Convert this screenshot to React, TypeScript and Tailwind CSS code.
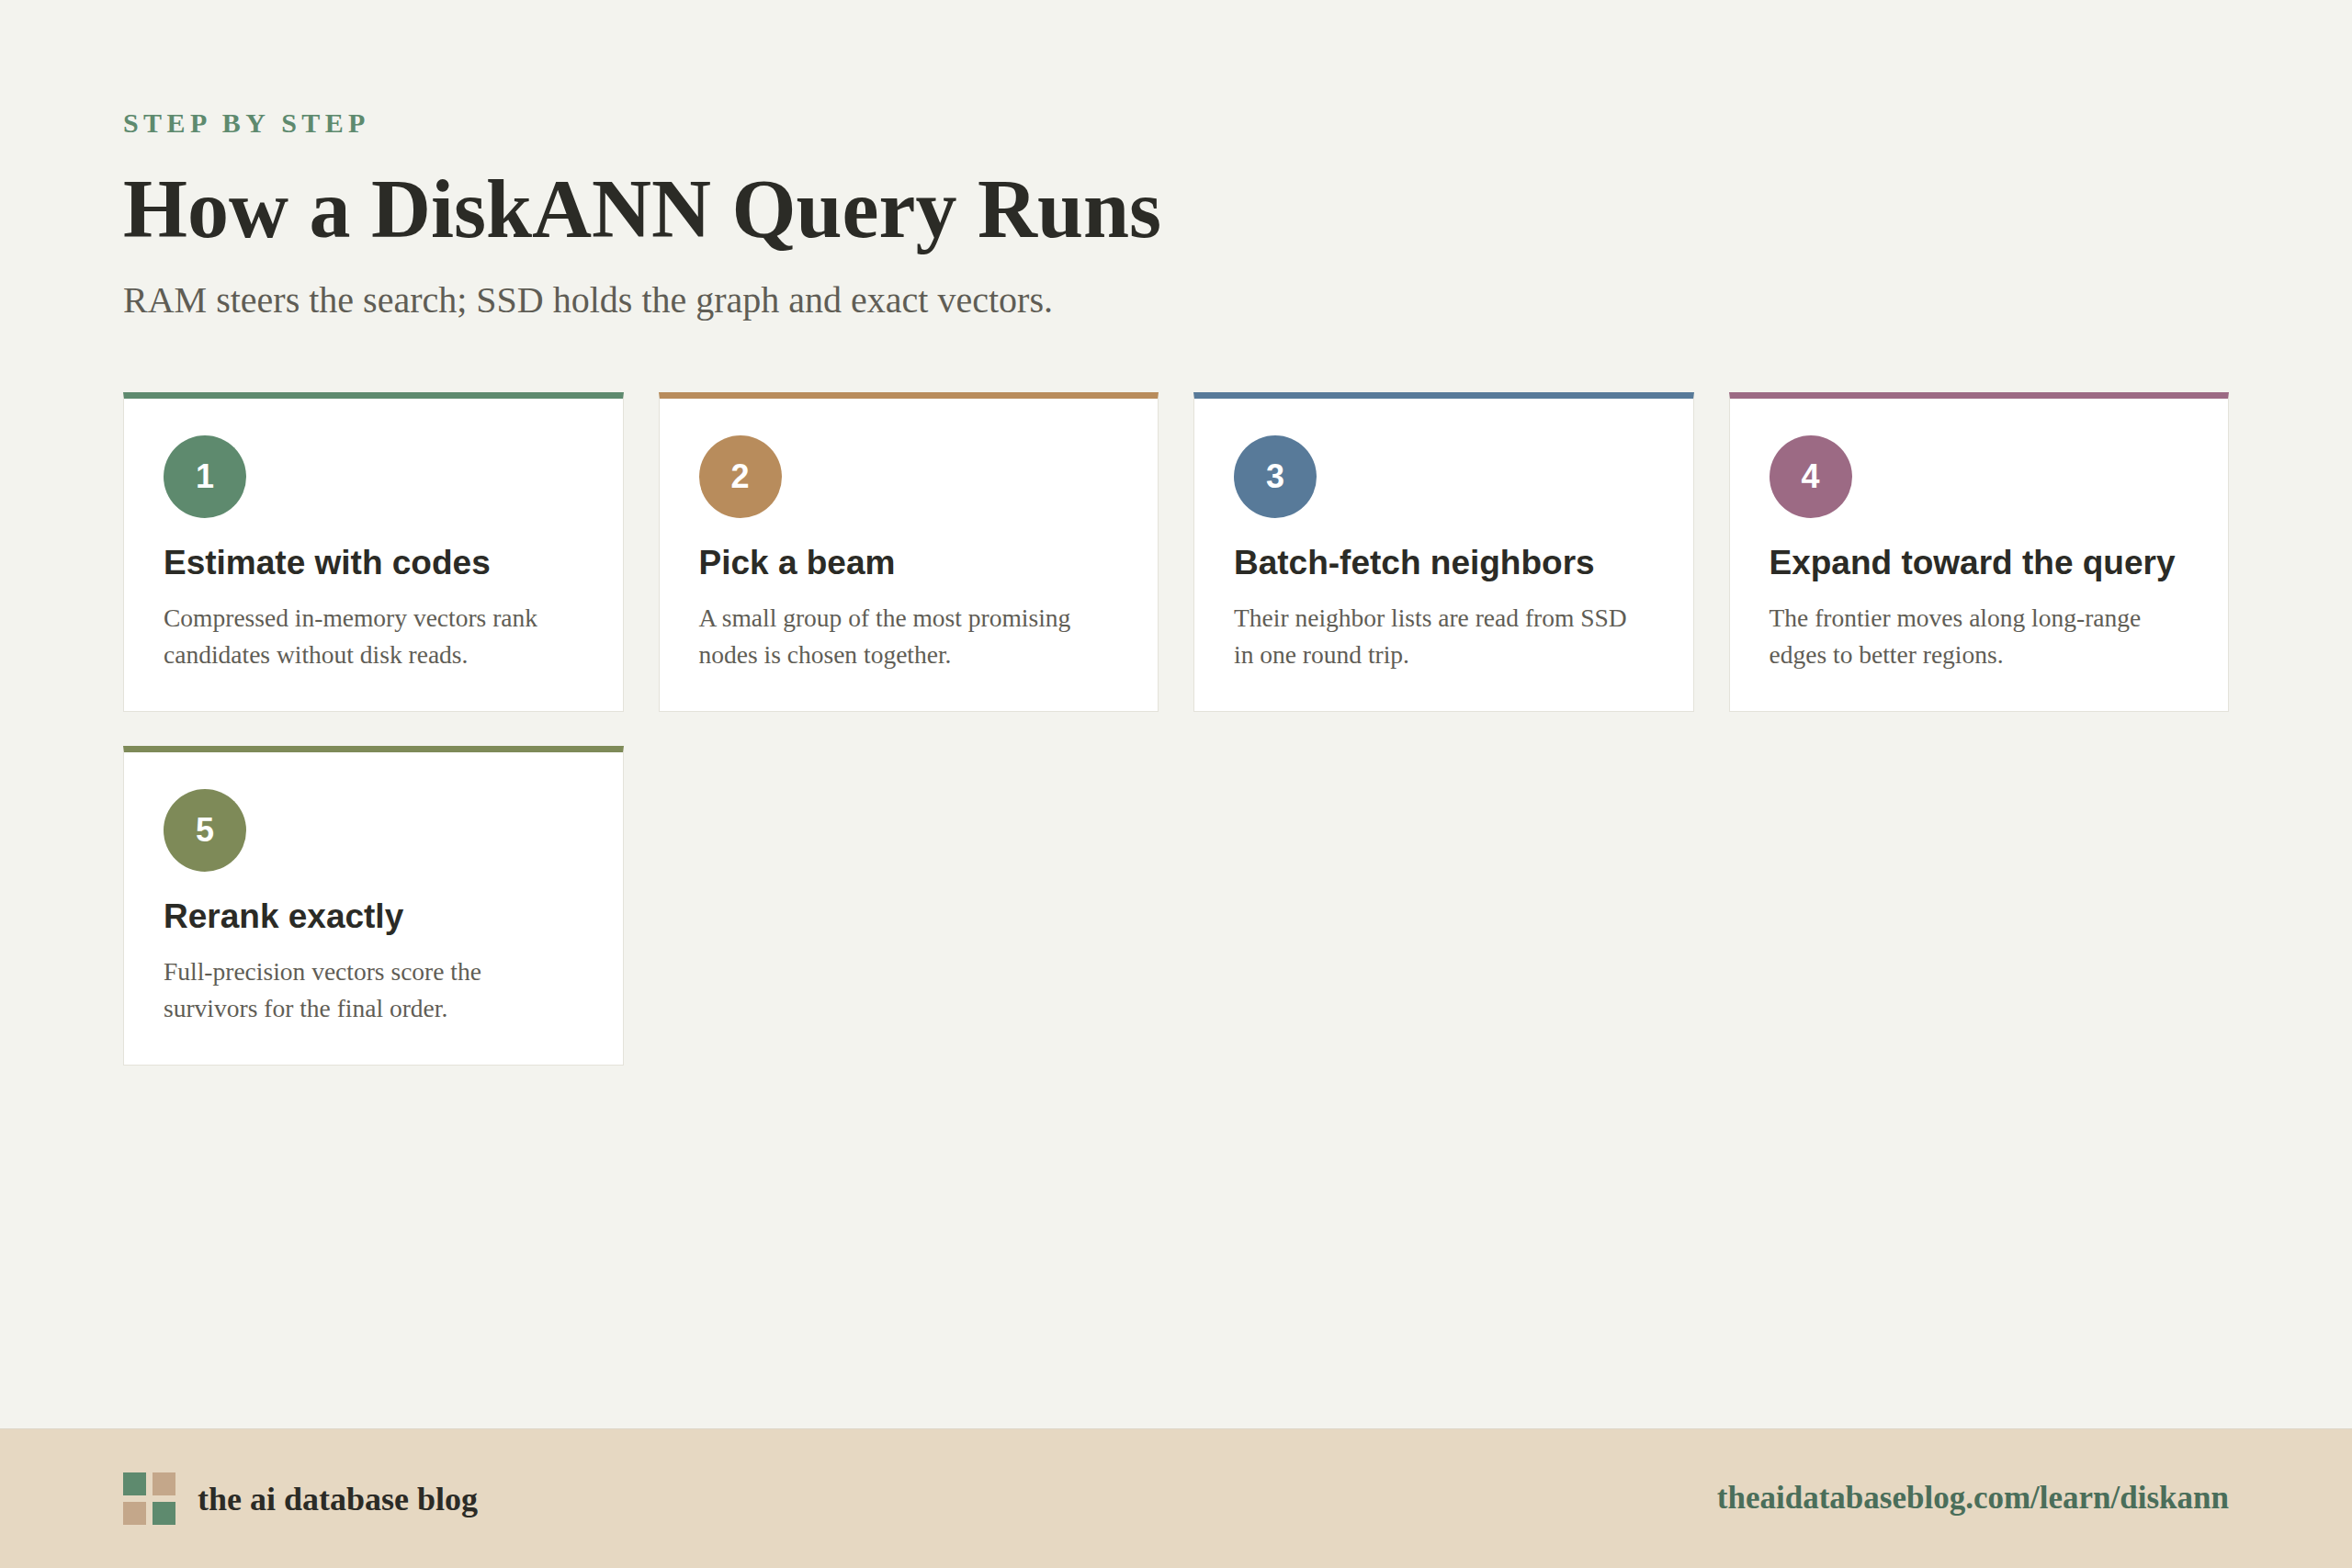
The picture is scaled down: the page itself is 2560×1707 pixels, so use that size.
import React from "react";

const steps = [
  { n: "1", c: "#5e8a6e", t: "Estimate with codes", d: "Compressed in-memory vectors rank candidates without disk reads." },
  { n: "2", c: "#b88c5c", t: "Pick a beam", d: "A small group of the most promising nodes is chosen together." },
  { n: "3", c: "#587a99", t: "Batch-fetch neighbors", d: "Their neighbor lists are read from SSD in one round trip." },
  { n: "4", c: "#9c6a84", t: "Expand toward the query", d: "The frontier moves along long-range edges to better regions." },
  { n: "5", c: "#7e8a58", t: "Rerank exactly", d: "Full-precision vectors score the survivors for the final order." },
];

const serif = { fontFamily: '"Liberation Serif", "Times New Roman", serif' };
const sans = { fontFamily: '"Liberation Sans", Arial, sans-serif' };

export default function App() {
  return (
    <div className="w-[2560px] h-[1707px] bg-[#f3f3ee] flex flex-col" style={serif}>
      <div className="flex-1 px-[134px] pt-[119px]">
        <div className="text-[30px] font-bold tracking-[0.18em] text-[#5e8a6e] leading-none">STEP BY STEP</div>
        <h1 className="mt-[34px] text-[90px] font-bold text-[#2b2b26] leading-none">How a DiskANN Query Runs</h1>
        <p className="mt-[34px] text-[40px] text-[#5f5d55] leading-none">RAM steers the search; SSD holds the graph and exact vectors.</p>
        <div className="mt-[80px] grid grid-cols-4 gap-x-[38px] gap-y-[37px]">
          {steps.map((s) => (
            <div key={s.n} className="h-[348px] bg-white border border-[#e4e2da] border-t-[7px] px-[43px] pt-[40px]" style={{ borderTopColor: s.c }}>
              <div className="w-[90px] h-[90px] rounded-full flex items-center justify-center text-white text-[36px] font-bold" style={{ background: s.c, ...sans }}>{s.n}</div>
              <div className="mt-[30px] text-[37px] font-bold text-[#2b2b26] leading-none" style={sans}>{s.t}</div>
              <p className="mt-[22px] text-[27.5px] leading-[40px] text-[#5f5d55] pr-[16px]">{s.d}</p>
            </div>
          ))}
        </div>
      </div>
      <div className="h-[152px] bg-[#e6d8c2] border-t border-[#ddd6c8] px-[134px] flex items-center justify-between">
        <div className="flex items-center gap-[24px]">
          <div className="grid grid-cols-2 gap-[7px]">
            <div className="w-[25px] h-[25px] bg-[#5e8a6e]" />
            <div className="w-[25px] h-[25px] bg-[#c4a78a]" />
            <div className="w-[25px] h-[25px] bg-[#c4a78a]" />
            <div className="w-[25px] h-[25px] bg-[#5e8a6e]" />
          </div>
          <span className="text-[36px] font-bold text-[#2b2b26]">the ai database blog</span>
        </div>
        <span className="text-[35px] font-bold text-[#4a6e5a]">theaidatabaseblog.com/learn/diskann</span>
      </div>
    </div>
  );
}
